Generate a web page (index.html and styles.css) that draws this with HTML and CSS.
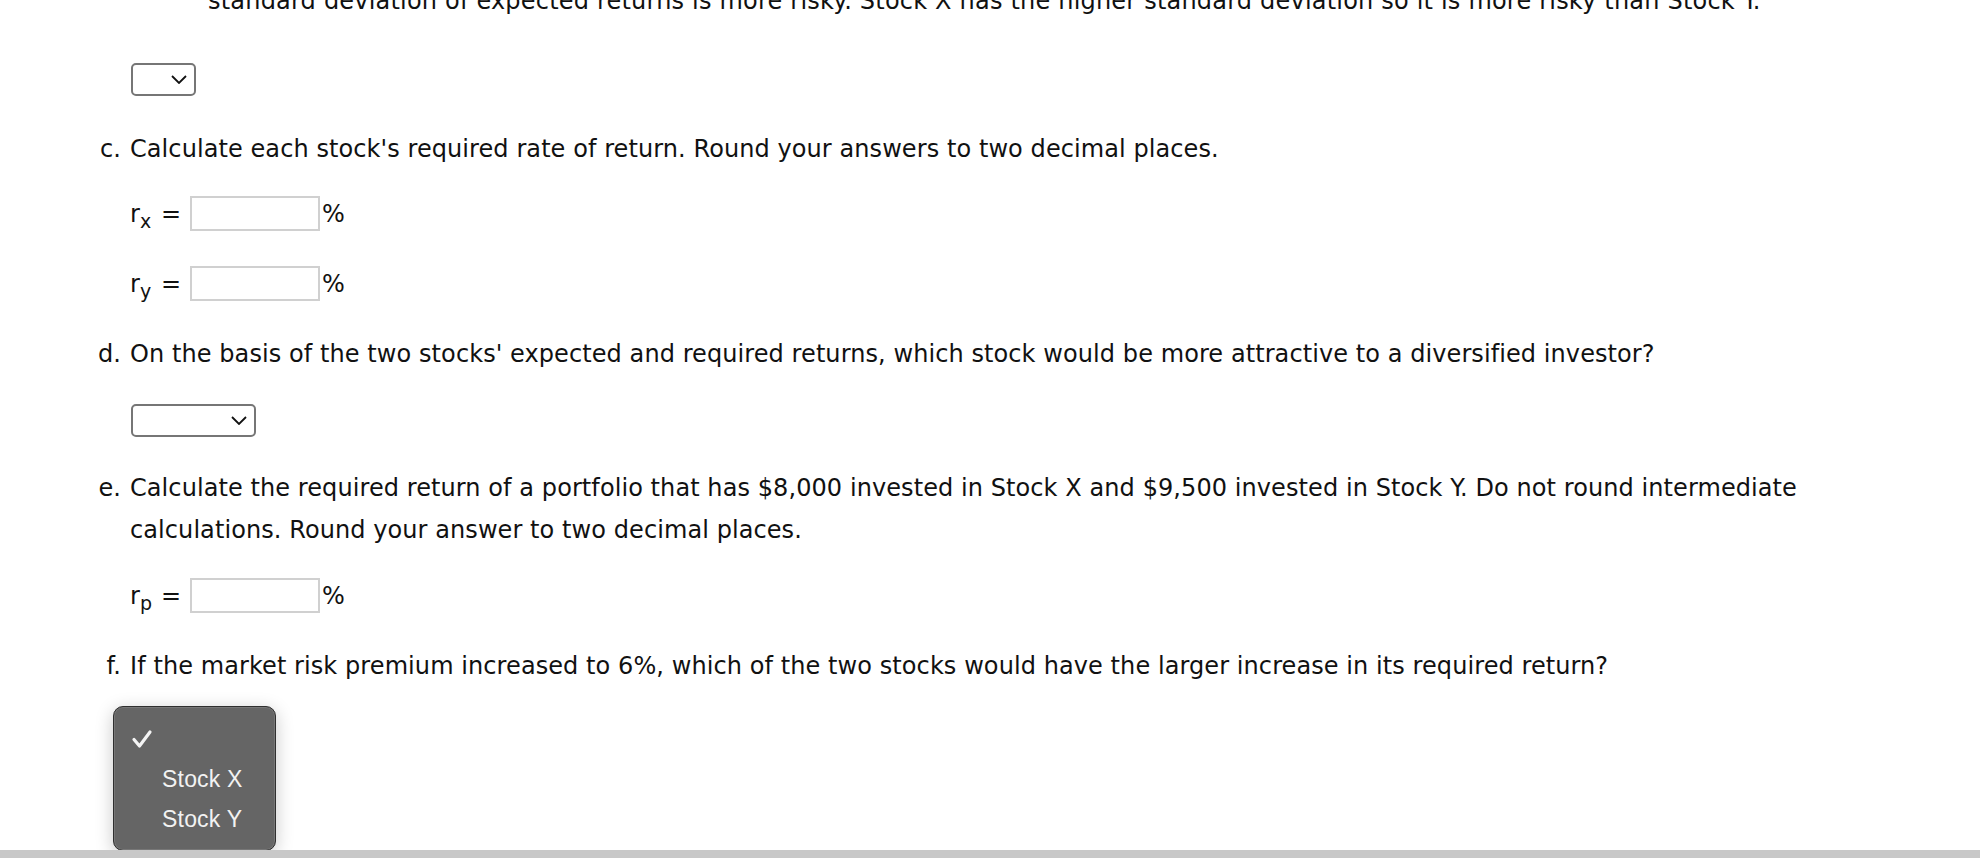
FILE: index.html
```html
<!DOCTYPE html>
<html lang="en">
<head>
  <meta charset="UTF-8" />
  <meta name="viewport" content="width=device-width, initial-scale=1.0"/>
  <title>Required Rate of Return</title>
  <link rel="stylesheet" href="styles.css">
</head>
<body>
  <div class="problem">
    <p class="option-text">standard deviation of expected returns is more risky. Stock X has the higher standard deviation so it is more risky than Stock Y.</p>

    <div class="select select-short">
      <svg class="chevron" width="16" height="9" viewBox="0 0 16 9"><path d="M1 1 L8 8 L15 1" fill="none" stroke="#111" stroke-width="1.8"/></svg>
    </div>

    <div class="question q-c">
      <span class="label">c.</span>
      <span class="text">Calculate each stock's required rate of return. Round your answers to two decimal places.</span>
    </div>

    <div class="eq-row row-x">
      <span class="var">r<sub>x</sub></span>
      <span class="eq">=</span>
      <input type="text" class="answer">
      <span class="pct">%</span>
    </div>

    <div class="eq-row row-y">
      <span class="var">r<sub>y</sub></span>
      <span class="eq">=</span>
      <input type="text" class="answer">
      <span class="pct">%</span>
    </div>

    <div class="question q-d">
      <span class="label">d.</span>
      <span class="text">On the basis of the two stocks' expected and required returns, which stock would be more attractive to a diversified investor?</span>
    </div>

    <div class="select select-mid">
      <svg class="chevron" width="16" height="9" viewBox="0 0 16 9"><path d="M1 1 L8 8 L15 1" fill="none" stroke="#111" stroke-width="1.8"/></svg>
    </div>

    <div class="question q-e">
      <span class="label">e.</span>
      <span class="text">Calculate the required return of a portfolio that has $8,000 invested in Stock X and $9,500 invested in Stock Y. Do not round intermediate calculations. Round your answer to two decimal places.</span>
    </div>

    <div class="eq-row row-p">
      <span class="var">r<sub>p</sub></span>
      <span class="eq">=</span>
      <input type="text" class="answer">
      <span class="pct">%</span>
    </div>

    <div class="question q-f">
      <span class="label">f.</span>
      <span class="text">If the market risk premium increased to 6%, which of the two stocks would have the larger increase in its required return?</span>
    </div>

    <div class="menu-anchor">
      <div class="select select-mid"></div>
      <div class="menu">
        <div class="menu-item checked">
          <svg width="22" height="20" viewBox="0 0 22 20"><path d="M3 10.5 L8.5 17 L19 3" fill="none" stroke="#f4f4f4" stroke-width="3.2" stroke-linecap="round" stroke-linejoin="round"/></svg>
        </div>
        <div class="menu-item">Stock X</div>
        <div class="menu-item">Stock Y</div>
      </div>
    </div>
  </div>

  <div class="scroll-track"></div>
</body>
</html>
```

FILE: styles.css
```css
html {
  overflow: hidden;
}

body {
  margin: 0;
  font-family: "DejaVu Sans", Verdana, sans-serif;
  font-size: 24px;
  line-height: 42px;
  letter-spacing: 0.08px;
  color: #111;
  background-color: #fff;
}

.problem {
  margin-top: -20px;
  padding-left: 90px;
  width: 1740px;
}

.option-text {
  margin: 0;
  padding-left: 118px;
  white-space: nowrap;
  letter-spacing: 0.2px;
}

/* fake select boxes */
.select {
  box-sizing: border-box;
  height: 33px;
  margin-left: 41px;
  border: 2px solid #767676;
  border-radius: 5px;
  background-color: #fff;
  display: flex;
  align-items: center;
  justify-content: flex-end;
  padding-right: 7px;
}

.select-short {
  width: 65px;
  margin-top: 41px;
}

.select-mid {
  width: 125px;
  margin-top: 29px;
}

/* questions */
.question {
  display: grid;
  grid-template-columns: 31px 1fr;
  column-gap: 9px;
}

.question .label {
  text-align: right;
}

.q-c { margin-top: 32px; }
.q-d { margin-top: 32px; }
.q-e { margin-top: 30px; }
.q-f { margin-top: 32px; }

/* equation rows */
.eq-row {
  display: flex;
  align-items: center;
  height: 35px;
  margin-left: 40px;
}

.row-x { margin-top: 26px; }
.row-y { margin-top: 35px; }
.row-p { margin-top: 27px; }

.var {
  width: 31px;
  line-height: 28px;
}

.var sub {
  font-size: 19px;
  vertical-align: -6px;
  line-height: 0;
}

.eq {
  width: 29px;
  line-height: 28px;
}

.answer {
  box-sizing: border-box;
  width: 130px;
  height: 35px;
  border: 2px solid #d0d0d0;
  border-radius: 0;
  margin: 0 2px 0 0;
  padding: 0 6px;
  font-family: inherit;
  font-size: 20px;
  outline: none;
}

.pct {
  line-height: 28px;
}

/* open dropdown for f. */
.menu-anchor {
  position: relative;
  height: 144px;
  margin-top: 19px;
}

.menu-anchor .select {
  margin-top: 10px;
}

.menu {
  position: absolute;
  top: 0;
  left: 23px;
  z-index: 5;
  box-sizing: border-box;
  width: 163px;
  height: 145px;
  padding: 12px 0;
  background-color: #656565;
  border: 1px solid #2f2f2f;
  border-radius: 10px;
  box-shadow: 0 4px 18px rgba(0, 0, 0, 0.22), inset 0 0 0 1px #777;
  font-family: "Liberation Sans", Arial, sans-serif;
  font-size: 23px;
  line-height: 40px;
  letter-spacing: 0.2px;
  color: #f2f2f2;
}

.menu-item {
  height: 40px;
  display: flex;
  align-items: center;
  padding-left: 48px;
}

.menu-item.checked {
  padding-left: 17px;
}

.scroll-track {
  position: fixed;
  left: 0;
  right: 0;
  bottom: 0;
  height: 8px;
  background-color: #c8c8c8;
  z-index: 1;
}
```
